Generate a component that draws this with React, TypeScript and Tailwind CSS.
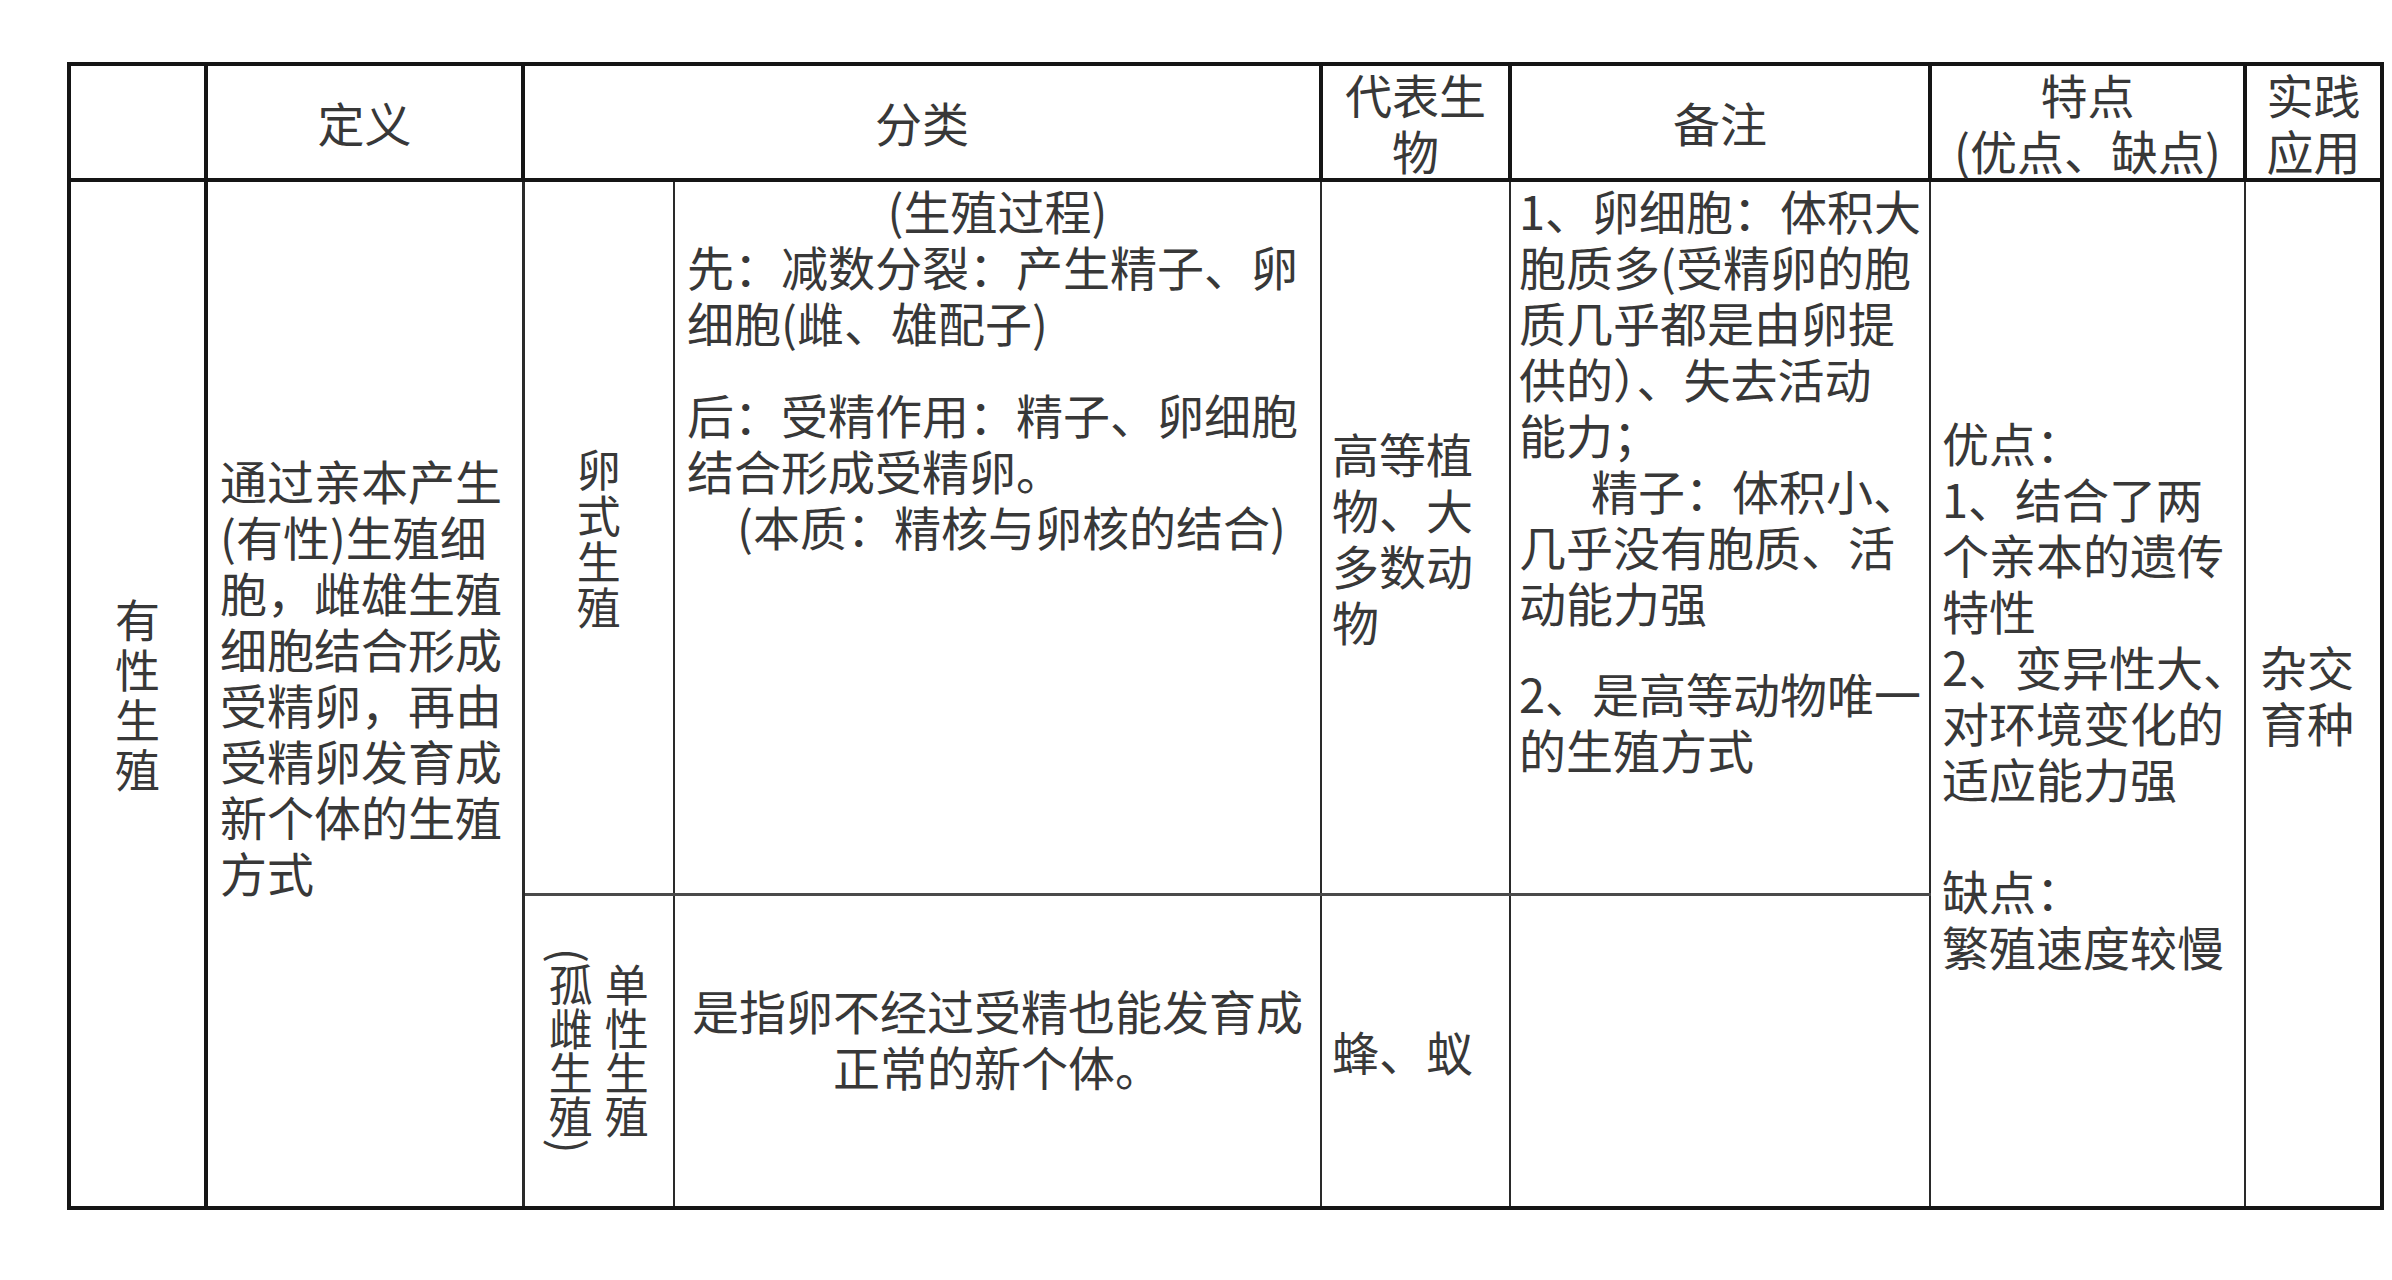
import React from "react";

const thick = "border-[4px] border-[#151515]";
const thin = "border-[2px] border-[#2a2a2a]";

function Lines({ lines, className = "" }: { lines: string[]; className?: string }) {
  return (
    <div className={className}>
      {lines.map((l, i) => (
        <div key={i} className="whitespace-nowrap">
          {l}
        </div>
      ))}
    </div>
  );
}

export default function App() {
  return (
    <div className="min-h-screen w-full bg-white pl-[67px] pt-[62px] font-['Noto_Sans_CJK_SC','Noto_Sans',sans-serif] text-[#383838]">
      <table className="w-[2313px] table-fixed border-collapse border-[4px] border-[#151515] text-[47px] leading-[56px]">
        <colgroup>
          <col className="w-[137px]" />
          <col className="w-[317px]" />
          <col className="w-[151px]" />
          <col className="w-[647px]" />
          <col className="w-[189px]" />
          <col className="w-[420px]" />
          <col className="w-[315px]" />
          <col className="w-[137px]" />
        </colgroup>
        <thead>
          <tr className="h-[113px]">
            <th className={`${thick} p-0 font-normal`}></th>
            <th className={`${thick} p-0 text-center align-middle font-normal`}>定义</th>
            <th colSpan={2} className={`${thick} p-0 text-center align-middle font-normal`}>
              分类
            </th>
            <th className={`${thick} p-0 text-center align-middle font-normal`}>
              <div>代表生</div>
              <div>物</div>
            </th>
            <th className={`${thick} p-0 text-center align-middle font-normal`}>备注</th>
            <th className={`${thick} p-0 text-center align-middle font-normal`}>
              <div>特点</div>
              <div className="whitespace-nowrap">(优点、缺点)</div>
            </th>
            <th className={`${thick} p-0 text-center align-middle font-normal`}>
              <div>实践</div>
              <div>应用</div>
            </th>
          </tr>
        </thead>
        <tbody>
          <tr className="h-[714px]">
            <td rowSpan={2} className={`${thin} border-r-[4px] border-r-[#151515] p-0 align-middle`}>
              <div className="flex flex-col items-center text-[45px] leading-[50px]">
                <span>有</span>
                <span>性</span>
                <span>生</span>
                <span>殖</span>
              </div>
            </td>
            <td rowSpan={2} className={`${thin} border-r-[3px] pl-[12px] pr-0 pb-[36px] align-middle`}>
              <Lines
                lines={[
                  "通过亲本产生",
                  "(有性)生殖细",
                  "胞，雌雄生殖",
                  "细胞结合形成",
                  "受精卵，再由",
                  "受精卵发育成",
                  "新个体的生殖",
                  "方式",
                ]}
              />
            </td>
            <td className={`${thin} border-b-[3px] border-b-[#4a4a4a] p-0 align-middle`}>
              <div className="flex flex-col items-center text-[44px] leading-[46px]">
                <span>卵</span>
                <span>式</span>
                <span>生</span>
                <span>殖</span>
              </div>
            </td>
            <td className={`${thin} border-b-[3px] border-b-[#4a4a4a] p-0 pl-[12px] align-top`}>
              <div className="pr-[12px] text-center">(生殖过程)</div>
              <Lines lines={["先：减数分裂：产生精子、卵", "细胞(雌、雄配子)"]} />
              <Lines className="mt-[36px]" lines={["后：受精作用：精子、卵细胞", "结合形成受精卵。"]} />
              <div className="whitespace-nowrap pl-[50px]">(本质：精核与卵核的结合)</div>
            </td>
            <td className={`${thin} border-b-[3px] border-b-[#4a4a4a] p-0 pl-[10px] align-middle`}>
              <Lines lines={["高等植", "物、大", "多数动", "物"]} />
            </td>
            <td className={`${thin} border-b-[3px] border-b-[#4a4a4a] p-0 pl-[8px] align-top`}>
              <Lines
                lines={[
                  "1、卵细胞：体积大",
                  "胞质多(受精卵的胞",
                  "质几乎都是由卵提",
                  "供的）、失去活动",
                  "能力；",
                ]}
              />
              <div className="whitespace-nowrap pl-[72px]">精子：体积小、</div>
              <Lines lines={["几乎没有胞质、活", "动能力强"]} />
              <Lines className="mt-[35px]" lines={["2、是高等动物唯一", "的生殖方式"]} />
            </td>
            <td rowSpan={2} className={`${thin} p-0 pl-[11px] align-middle`}>
              <Lines
                lines={[
                  "优点：",
                  "1、结合了两",
                  "个亲本的遗传",
                  "特性",
                  "2、变异性大、",
                  "对环境变化的",
                  "适应能力强",
                ]}
              />
              <Lines className="mt-[56px]" lines={["缺点：", "繁殖速度较慢"]} />
            </td>
            <td rowSpan={2} className={`${thin} p-0 pl-[14px] align-middle`}>
              <Lines lines={["杂交", "育种"]} />
            </td>
          </tr>
          <tr className="h-[314px]">
            <td className={`${thin} p-0 align-middle`}>
              <div className="flex flex-row-reverse items-center justify-center gap-[10px] text-[44px]">
                <span className="leading-[46px] [writing-mode:vertical-rl]">单性生殖</span>
                <span className="leading-[46px] [writing-mode:vertical-rl]">(孤雌生殖)</span>
              </div>
            </td>
            <td className={`${thin} p-0 pb-[26px] text-center align-middle`}>
              <div className="whitespace-nowrap">是指卵不经过受精也能发育成</div>
              <div className="whitespace-nowrap">正常的新个体。</div>
            </td>
            <td className={`${thin} p-0 pl-[10px] align-middle`}>
              <div className="whitespace-nowrap">蜂、蚁</div>
            </td>
            <td className={`${thin} p-0`}></td>
          </tr>
        </tbody>
      </table>
    </div>
  );
}
